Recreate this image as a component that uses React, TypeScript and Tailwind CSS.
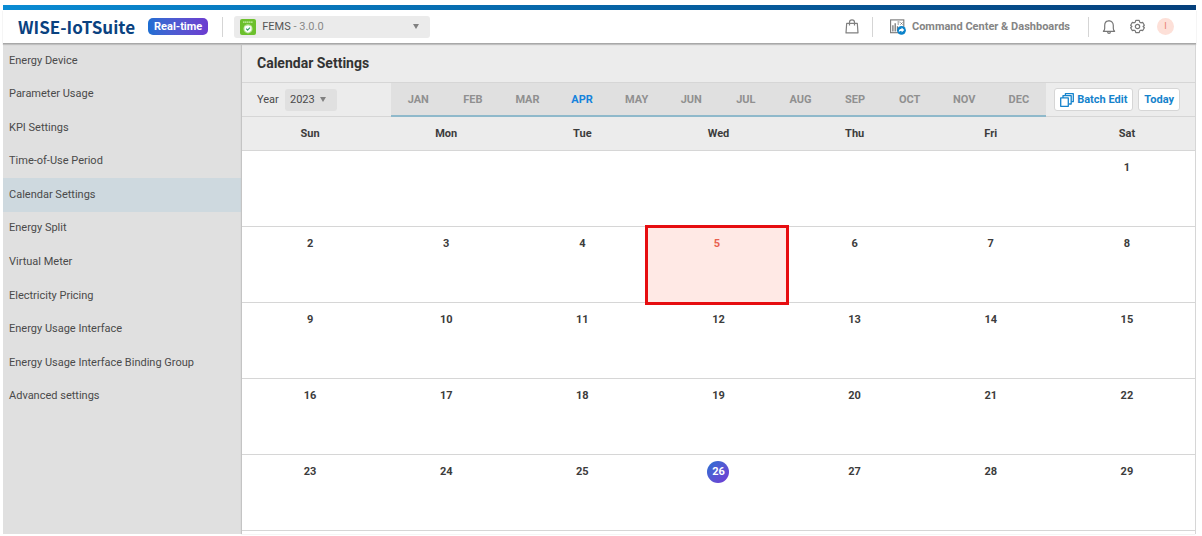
import type { ReactNode } from 'react';

const menu = [
  'Energy Device',
  'Parameter Usage',
  'KPI Settings',
  'Time-of-Use Period',
  'Calendar Settings',
  'Energy Split',
  'Virtual Meter',
  'Electricity Pricing',
  'Energy Usage Interface',
  'Energy Usage Interface Binding Group',
  'Advanced settings',
];
const months = ['JAN', 'FEB', 'MAR', 'APR', 'MAY', 'JUN', 'JUL', 'AUG', 'SEP', 'OCT', 'NOV', 'DEC'];
const weekdays = ['Sun', 'Mon', 'Tue', 'Wed', 'Thu', 'Fri', 'Sat'];
const weeks = [0, 1, 2, 3, 4].map((w) => weekdays.map((_, d) => w * 7 + d - 5));

function Caret() {
  return (
    <svg viewBox="0 0 6 5" className="pointer-events-none h-[5px] w-[6px] fill-[#808080]" aria-hidden="true">
      <path d="M0 0h6L3 5z" />
    </svg>
  );
}

function FemsIcon() {
  return (
    <svg viewBox="0 0 16 16" className="h-4 w-4 shrink-0" aria-hidden="true">
      <rect width="16" height="16" rx="2" fill="#6cc02c" />
      <path d="M3 3.2h10" stroke="#c9edab" strokeWidth="1.3" strokeDasharray="1.5 .4" />
      <circle cx="8" cy="9.8" r="4.6" fill="#b4e292" />
      <path d="M4.600 7.600l3.400-1 3.400 1v2.600c0 1.700-1.500 2.800-3.400 3.400-1.900-.6-3.400-1.700-3.400-3.400z" fill="#fff" />
      <path d="M6.200 9.7l1.400 1.400 2.400-2.400" fill="none" stroke="#38a06a" strokeWidth="1.2" />
    </svg>
  );
}

function BagIcon() {
  return (
    <svg viewBox="0 0 14 15" className="h-[15px] w-[14px]" fill="none" stroke="#808080" strokeWidth="1.2" aria-hidden="true">
      <path d="M1.700 4.300h10.600l.7 9.600H1z" strokeLinejoin="round" />
      <path d="M4.500 6.500V3.300C4.500 1.800 5.500.8 7 .8s2.500 1 2.500 2.500v3.200" />
    </svg>
  );
}

function DashboardIcon() {
  return (
    <svg viewBox="0 0 16 16" className="h-4 w-4" fill="none" aria-hidden="true">
      <rect x=".6" y=".9" width="13.200" height="12.800" stroke="#777" strokeWidth="1.100" />
      <path d="M2.900 12.500V6.200M5.200 12.500V4.200M7.500 12.500V7.200" stroke="#777" strokeWidth="1.300" />
      <path d="M7.500 3h2M7.500 5h1.500M10.500 3.500l2 2m0-2l-2 2" stroke="#777" />
      <circle cx="11.500" cy="11.300" r="4.400" fill="#0a82ca" />
      <path d="M8.800 13c0-2.200 1-3.200 2.800-3.200V8.400l2.700 2.500-2.700 2.500V12c-1.300 0-2 .2-2.800 1z" fill="#fff" />
    </svg>
  );
}

function BellIcon() {
  return (
    <svg viewBox="0 0 14 16" className="h-4 w-[14px]" fill="none" stroke="#777" strokeWidth="1.200" aria-hidden="true">
      <path d="M7 .9v1.200M1.400 12.300h11.200c-.9-.8-1.300-1.700-1.300-3V6.500C11.300 3.800 9.500 1.900 7 1.900S2.700 3.800 2.700 6.500v2.800c0 1.300-.4 2.200-1.300 3z" strokeLinejoin="round" />
      <path d="M5.600 12.800c0 1 .5 1.600 1.400 1.600s1.400-.6 1.400-1.600" />
    </svg>
  );
}

function GearIcon() {
  return (
    <svg viewBox="0 0 16 16" className="h-[15px] w-[15px]" fill="none" stroke="#777" strokeWidth="1.300" strokeLinejoin="round" aria-hidden="true">
      <path d="M6.200 1.500h3.600l.6 1.900 1.200.7 2-.4 1.700 3L14 8l1.300 1.300-1.700 3-2-.4-1.200.7-.6 1.900H6.200l-.6-1.900-1.200-.7-2 .4-1.700-3L2 8 .7 6.700l1.700-3 2 .4 1.200-.7z" />
      <circle cx="8" cy="8" r="2.300" />
    </svg>
  );
}

function StackIcon() {
  return (
    <svg viewBox="0 0 14 14" className="h-[14px] w-[14px]" fill="none" stroke="#1583cc" strokeWidth="1.300" strokeLinejoin="round" aria-hidden="true">
      <path d="M5.400 2.600V.7h7.900v8h-1.900" />
      <path d="M3 4.900V2.700h8.200v8.300H9.100" />
      <rect x=".7" y="4.900" width="7.600" height="8.400" />
    </svg>
  );
}

function Divider() {
  return <span className="h-5 w-px bg-[#d5d5d5]" />;
}

function ToolButton({ children }: { children: ReactNode }) {
  return (
    <button className="flex h-[23px] items-center gap-[3px] rounded-[3px] border border-[#d6d6d6] bg-white px-[5px] font-bold text-[#1583cc]">
      {children}
    </button>
  );
}

function Day({ day }: { day: number }) {
  if (day < 1) return <td className="border-b border-[#d6d6d6]" />;
  if (day === 5)
    return (
      <td className="relative border-b border-[#d6d6d6] align-top text-[#e8604f]">
        <div className="absolute -top-[2px] -right-[2px] -bottom-[3px] -left-[5px] border-3 border-[#e60d10] bg-[#ffe9e5] pt-2">{day}</div>
      </td>
    );
  return (
    <td className="border-b border-[#d6d6d6] pt-[9px] align-top">
      {day === 26 ? (
        <span className="mx-auto -mt-[3px] flex h-[22px] w-[22px] items-center justify-center rounded-full bg-linear-to-br from-[#1670d2] to-[#7036d4] text-white">
          {day}
        </span>
      ) : (
        day
      )}
    </td>
  );
}

export default function App() {
  return (
    <div className="flex min-h-screen flex-col bg-white pt-[5px] pr-[6px] pb-[2px] pl-[3px] font-[Roboto,sans-serif] text-[11px] leading-4 text-[#4a4a4a]">
      <div className="h-[5px] bg-linear-to-r from-[#0a8bd3] to-[#05407c]" />
      <header className="z-10 flex h-[34px] items-center border-b border-[#a8a8a8] pr-[22px] pl-[15px] shadow-[0_1px_1px_#c0c0c0]">
        <a href="#home" className="font-['Noto_Sans_CJK_SC',sans-serif] text-[17px] leading-8 font-bold text-[#0a4280]">
          WISE-IoTSuite
        </a>
        <span className="ml-[13px] rounded-[5px] bg-linear-to-r from-[#1b6ed2] to-[#6b3bd0] px-[6px] leading-[17px] font-bold text-white">
          Real-time
        </span>
        <span className="ml-[14px] flex">
          <Divider />
        </span>
        <button className="ml-[11px] flex h-[22px] w-[196px] items-center rounded-[3px] bg-[#ebebeb] px-[6px]" aria-label="Application">
          <FemsIcon />
          <span className="ml-[6px] flex-1 text-left text-[#555]">
            FEMS <span className="text-[#888]">- 3.0.0</span>
          </span>
          <span className="mr-[5px]">
            <Caret />
          </span>
        </button>
        <div className="ml-auto flex items-center">
          <button aria-label="Marketplace">
            <BagIcon />
          </button>
          <span className="mr-[17px] ml-[13px] flex">
            <Divider />
          </span>
          <a href="#dashboards" className="flex items-center gap-[6px] font-bold text-[#858585]">
            <DashboardIcon />
            Command Center &amp; Dashboards
          </a>
          <span className="mr-[13px] ml-[18px] flex">
            <Divider />
          </span>
          <button aria-label="Notifications">
            <BellIcon />
          </button>
          <button aria-label="Settings" className="ml-[14px]">
            <GearIcon />
          </button>
          <button className="ml-3 h-[17px] w-[17px] rounded-full bg-[#fde0d8] text-[9px] leading-[17px] text-[#e88070]">I</button>
        </div>
      </header>
      <div className="flex flex-1">
        <nav className="w-[239px] shrink-0 bg-[#e0e0e0]">
          <ul className="grid h-[369px] auto-rows-fr">
            {menu.map((item) => (
              <li key={item} className={item === 'Calendar Settings' ? 'bg-[#ced9df]' : ''}>
                <a href="#menu" className="flex h-full items-center px-[6px]">
                  {item}
                </a>
              </li>
            ))}
          </ul>
        </nav>
        <main className="flex min-w-0 flex-1 flex-col border-r border-[#d6d6d6] shadow-[-1px_0_1px_#c4c4c4]">
          <h1 className="flex h-[39px] items-center border-b border-[#d6d6d6] bg-[#ececec] px-[15px] text-[14px] font-bold text-[#333]">
            Calendar Settings
          </h1>
          <div className="flex h-[34px] items-center border-b border-[#d6d6d6] bg-[#ececec] px-[15px]">
            <label htmlFor="year" className="w-7">
              Year
            </label>
            <div className="relative flex items-center">
              <select id="year" defaultValue="2023" className="h-[22px] w-[52px] appearance-none rounded-[3px] bg-[#e0e0e0] px-[5px]">
                <option>2022</option>
                <option>2023</option>
                <option>2024</option>
              </select>
              <span className="pointer-events-none absolute right-[11px]">
                <Caret />
              </span>
            </div>
            <div className="ml-[54px] grid h-[34px] flex-1 grid-cols-12 self-start border-b-2 border-[#8fb9cb] bg-[#e0e0e0] pt-[2px]">
              {months.map((m) => (
                <button key={m} className={m === 'APR' ? 'font-bold text-[#1583dc]' : 'font-bold text-[#909090]'}>
                  {m}
                </button>
              ))}
            </div>
            <div className="ml-2 flex gap-[5px]">
              <ToolButton>
                <StackIcon />
                Batch Edit
              </ToolButton>
              <ToolButton>Today</ToolButton>
            </div>
          </div>
          <table className="w-full table-fixed border-separate border-spacing-0 text-center font-bold text-[#3c3c3c]">
            <thead>
              <tr className="h-[34px] bg-[#ececec]">
                {weekdays.map((d) => (
                  <th key={d} className="border-b border-[#d6d6d6] font-bold">
                    {d}
                  </th>
                ))}
              </tr>
            </thead>
            <tbody>
              {weeks.map((week) => (
                <tr key={week[0]} className="h-[76px]">
                  {week.map((day) => (
                    <Day key={day} day={day} />
                  ))}
                </tr>
              ))}
            </tbody>
          </table>
        </main>
      </div>
    </div>
  );
}
